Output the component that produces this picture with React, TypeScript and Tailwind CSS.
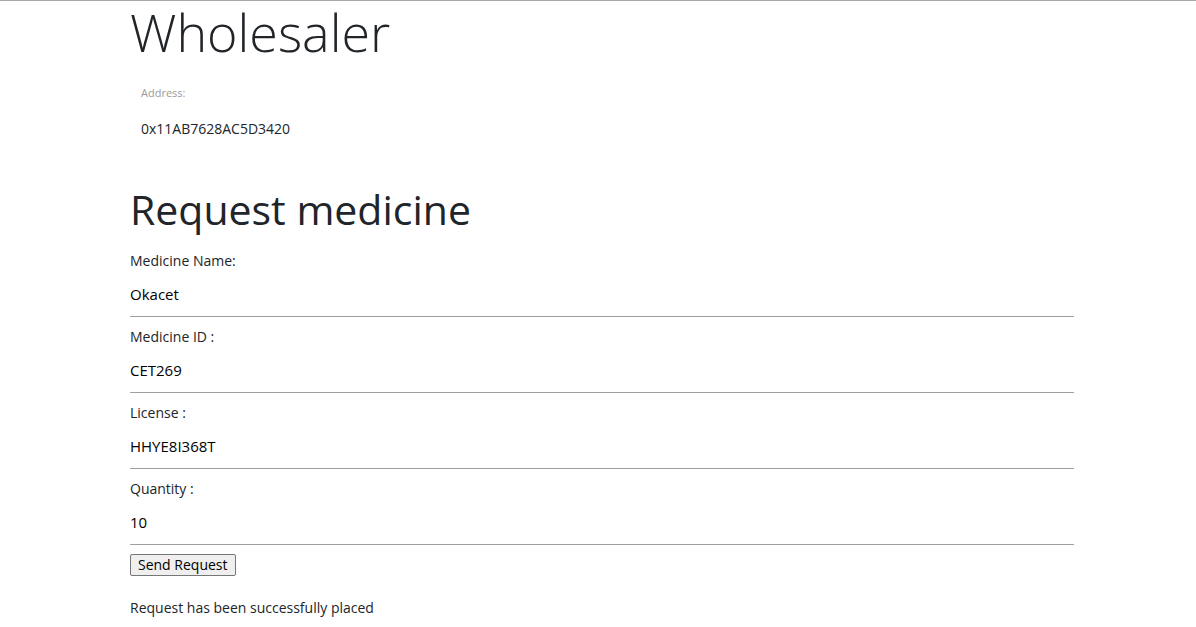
const fields = [
  { label: 'Medicine Name:', value: 'Okacet' },
  { label: 'Medicine ID :', value: 'CET269' },
  { label: 'License :', value: 'HHYE8I368T' },
  { label: 'Quantity :', value: '10' },
];

export default function App() {
  return (
    <div className="min-h-screen bg-white border-t border-[#a9a9a9] text-[#212529]" style={{ fontFamily: '"Open Sans", "Noto Sans", sans-serif' }}>
      <div className="ml-[130px] w-[944px]">
        <h1 className="text-[52px] leading-[62px] font-light">Wholesaler</h1>
        <div className="pl-[11px] pt-[22px]">
          <div className="text-[11px] text-[#9a9a9a]">Address:</div>
          <div className="text-[14px] mt-[16px]">0x11AB7628AC5D3420</div>
        </div>
        <h1 className="text-[41px] leading-[48px] font-normal mt-[46px]">Request medicine</h1>
        <div className="mt-[18px]">
          {fields.map((f) => (
            <div key={f.label} className="border-b border-[#a0a0a0] pb-[12px] mb-[10px] last:mb-[7px]">
              <div className="text-[14px] leading-[20px]">{f.label}</div>
              <div className="text-[15px] leading-[20px] mt-[13px] text-black">{f.value}</div>
            </div>
          ))}
        </div>
        <button className="text-[14px] leading-[18px] px-[7px] py-[1px] bg-[#efefef] border border-[#767676] rounded-[2px] text-black">
          Send Request
        </button>
        <p className="text-[14px] mt-[21px]">Request has been successfully placed</p>
      </div>
    </div>
  );
}
